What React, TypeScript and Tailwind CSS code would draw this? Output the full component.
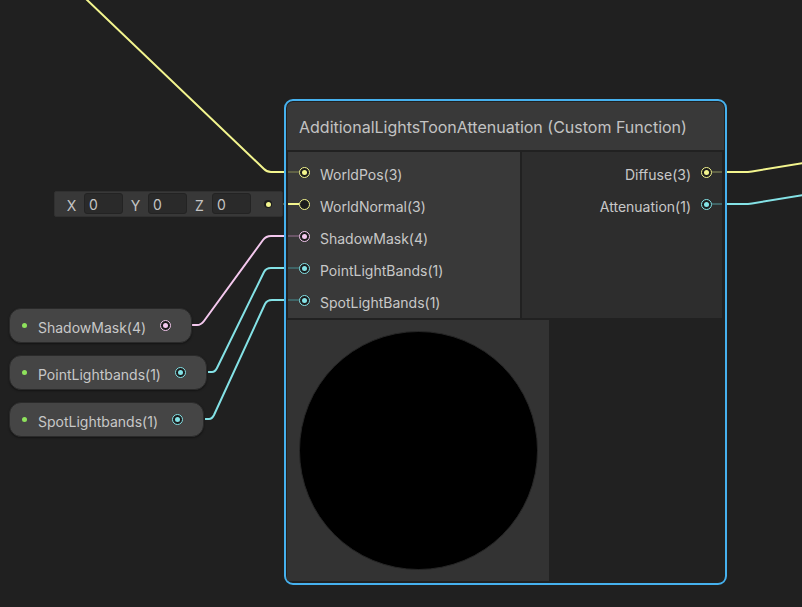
import React from 'react';

// Shader Graph canvas: one Custom Function node, an inline Vector3 field and three property nodes.

type Kind = 'v3' | 'v1' | 'v4';

const ring: Record<Kind, string> = {
  v3: 'border-[#f3f58e]',
  v1: 'border-[#84e2e6]',
  v4: 'border-[#f4c8ee]',
};
const dot: Record<Kind, string> = {
  v3: 'bg-[#f3f58e]',
  v1: 'bg-[#84e2e6]',
  v4: 'bg-[#f4c8ee]',
};
const stub: Record<Kind, string> = {
  v3: 'bg-[#5f6146]',
  v1: 'bg-[#3f6466]',
  v4: 'bg-[#6b5668]',
};

function Port({ kind, connected = true }: { kind: Kind; connected?: boolean }) {
  return (
    <span
      className={`flex h-[11px] w-[11px] shrink-0 items-center justify-center rounded-full border-[1.5px] bg-[#1c1c1c] ${ring[kind]}`}
    >
      {connected && <span className={`h-[5px] w-[5px] rounded-full ${dot[kind]}`} />}
    </span>
  );
}

const inputs: { label: string; kind: Kind; connected?: boolean; bright?: boolean }[] = [
  { label: 'WorldPos(3)', kind: 'v3' },
  { label: 'WorldNormal(3)', kind: 'v3', connected: false, bright: true },
  { label: 'ShadowMask(4)', kind: 'v4' },
  { label: 'PointLightBands(1)', kind: 'v1' },
  { label: 'SpotLightBands(1)', kind: 'v1' },
];

const outputs: { label: string; kind: Kind }[] = [
  { label: 'Diffuse(3)', kind: 'v3' },
  { label: 'Attenuation(1)', kind: 'v1' },
];

const properties: { label: string; kind: Kind }[] = [
  { label: 'ShadowMask(4)', kind: 'v4' },
  { label: 'PointLightbands(1)', kind: 'v1' },
  { label: 'SpotLightbands(1)', kind: 'v1' },
];

function Wires() {
  return (
    <svg className="absolute inset-0" width={802} height={607} fill="none" strokeWidth={2}>
      <path d="M85 -2 L264 169 Q267 172 271 172 L287 172" stroke="#f3f58e" />
      <path d="M272 204 L287 204" stroke="#5f6146" />
      <path d="M191 325 L197 325 Q201 325 204 321 L263 240 Q266 236 271 236 L287 236" stroke="#f4c8ee" />
      <path d="M208 372 L212 372 Q215 372 217 368 L264 272 Q266 268 271 268 L287 268" stroke="#84e2e6" />
      <path d="M205 419 L209 419 Q212 419 214 415 L265 304 Q267 300 272 300 L287 300" stroke="#84e2e6" />
      <path d="M724 172 L744 172 Q748 172 752 171.4 L804 163" stroke="#f3f58e" />
      <path d="M724 204 L744 204 Q748 204 752 203.4 L804 195" stroke="#84e2e6" />
    </svg>
  );
}

function VectorField() {
  const axes = ['X', 'Y', 'Z'];
  return (
    <div className="absolute left-[54px] top-[191px] flex h-[26px] w-[229px] items-center rounded-[2px] border border-[#303030] bg-[#383838] pl-[4px] text-[14px] text-[#c4c4c4]">
      {axes.map((a) => (
        <div key={a} className="flex items-center">
          <span className="w-[25px] pt-[2px] text-center">{a}</span>
          <span className="mb-[2px] flex h-[21px] w-[39px] items-center rounded-[3px] border border-[#232323] bg-[#2a2a2a] pl-[4px] pt-[2px]">
            0
          </span>
        </div>
      ))}
      <span className="ml-[13px] flex h-[8px] w-[8px] items-center justify-center rounded-full bg-[#1c1c1c]">
        <span className="h-[5px] w-[5px] rounded-full bg-[#f3f58e]" />
      </span>
    </div>
  );
}

function PropertyNodes() {
  return (
    <div className="absolute left-[9px] top-[308px] flex flex-col items-start gap-[12px]">
      {properties.map((p) => (
        <div
          key={p.label}
          className="flex h-[35px] items-center rounded-[12px] border border-[#2a2a2a] bg-[#454545] pl-[12px] pr-[20px] text-[14px] text-[#c8c8c8] shadow-[0_1px_2px_rgba(0,0,0,0.4)]"
        >
          <span className="h-[5px] w-[5px] rounded-full bg-[#8ee25c]" />
          <span className="ml-[11px] pt-[4px]">{p.label}</span>
          <span className="ml-[14px]">
            <Port kind={p.kind} />
          </span>
        </div>
      ))}
    </div>
  );
}

function CustomFunctionNode() {
  return (
    <div className="absolute left-[284px] top-[99px] h-[486px] w-[443px] rounded-[9px] border-2 border-[#46b1ee] bg-[#212121]">
      <div className="flex h-full flex-col overflow-hidden rounded-[7px] p-[1px]">
        {/* title */}
        <div className="flex h-[48px] shrink-0 items-center rounded-t-[6px] bg-[#393939] pl-[12px] pt-[2px] text-[16px] text-[#c3c3c3]">
          AdditionalLightsToonAttenuation (Custom Function)
        </div>

        {/* ports */}
        <div className="mt-[2px] flex h-[166px] shrink-0 gap-[2px]">
          <div className="ml-[1px] w-[232px] bg-[#393939] pt-[4px]">
            {inputs.map((p) => (
              <div key={p.label} className="flex h-8 items-center text-[14px] text-[#c8c8c8]">
                <span className={`h-[2px] w-[11px] ${p.bright ? dot[p.kind] : stub[p.kind]}`} />
                <Port kind={p.kind} connected={p.connected ?? true} />
                <span className="ml-[10px] pt-[4px]">{p.label}</span>
              </div>
            ))}
          </div>
          <div className="mr-[2px] flex-1 bg-[#2d2d2d] pt-[4px]">
            {outputs.map((p) => (
              <div key={p.label} className="flex h-8 items-center justify-end text-[14px] text-[#c8c8c8]">
                <span className="mr-[10px] pt-[4px]">{p.label}</span>
                <Port kind={p.kind} />
                <span className={`h-[2px] w-[10px] ${stub[p.kind]}`} />
              </div>
            ))}
          </div>
        </div>

        {/* preview */}
        <div className="mt-[2px] flex flex-1">
          <div className="flex h-[261px] w-[262px] items-center justify-center bg-[#333333]">
            <div className="h-[239px] w-[239px] rounded-full border border-[#262626] bg-black" />
          </div>
          <div className="flex-1 bg-[#212121]" />
        </div>
      </div>
    </div>
  );
}

export default function App() {
  return (
    <div
      className="relative h-[607px] w-[802px] overflow-hidden bg-[#202020]"
      style={{ fontFamily: 'Inter, "Noto Sans", sans-serif' }}
    >
      <Wires />
      <VectorField />
      <PropertyNodes />
      <CustomFunctionNode />
    </div>
  );
}
